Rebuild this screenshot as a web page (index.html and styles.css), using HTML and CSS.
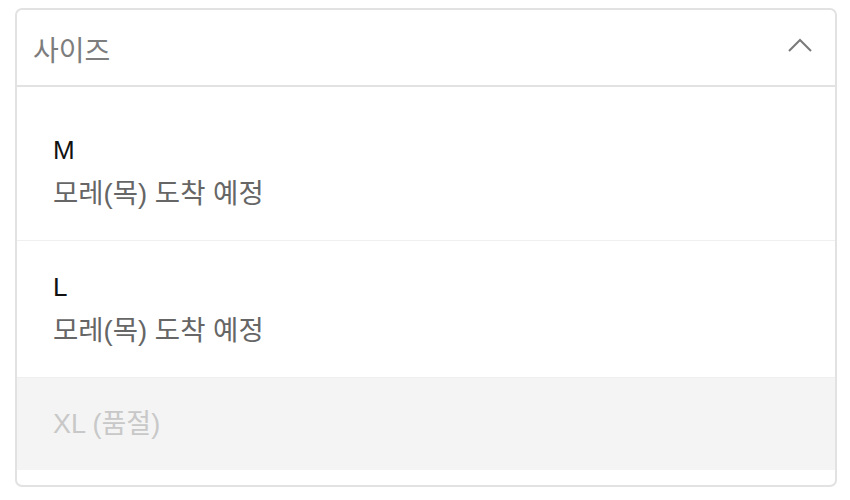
FILE: index.html
```html
<!DOCTYPE html>
<html lang="ko">
<head>
<meta charset="utf-8">
<link rel="stylesheet" href="styles.css">
</head>
<body>
<div class="select">
  <div class="select-head">
    <span class="select-label">사이즈</span>
    <svg class="chevron" width="24" height="14" viewBox="0 0 24 14"><polyline points="1,13 12,2 23,13" fill="none" stroke="#7a7a7a" stroke-width="2"/></svg>
  </div>
  <ul class="options">
    <li class="option">
      <div class="opt-name">M</div>
      <div class="opt-note">모레(목) 도착 예정</div>
    </li>
    <li class="option">
      <div class="opt-name">L</div>
      <div class="opt-note">모레(목) 도착 예정</div>
    </li>
    <li class="option disabled">
      <div class="opt-name">XL (품절)</div>
    </li>
  </ul>
</div>
</body>
</html>
```

FILE: styles.css
```css
html, body {
  margin: 0;
  padding: 0;
  background: #fff;
}
body {
  font-family: "Liberation Sans", "Noto Sans CJK KR", sans-serif;
  padding: 8px 13px 15px 15px;
}
.select {
  border: 2px solid #e2e2e2;
  border-radius: 7px;
  overflow: hidden;
  background: #fff;
}
.select-head {
  height: 75px;
  display: flex;
  align-items: center;
  justify-content: space-between;
  padding: 0 23px 0 16px;
  border-bottom: 2px solid #e2e2e2;
}
.select-label {
  font-size: 28px;
  color: #7d7d7d;
  padding-top: 2px;
}
.chevron {
  display: block;
  margin-top: -5px;
}
.options {
  list-style: none;
  margin: 0;
  padding: 17px 0 15px;
}
.option {
  padding: 24px 36px;
  border-bottom: 1px solid #efefef;
}
.option:last-child {
  border-bottom: none;
}
.opt-name {
  font-size: 26px;
  line-height: 44px;
  color: #111;
}
.opt-note {
  font-size: 27.5px;
  line-height: 44px;
  color: #666;
}
.option.disabled {
  background: #f4f4f4;
}
.option.disabled .opt-name {
  color: #c8c8c8;
  font-size: 27px;
}
```
